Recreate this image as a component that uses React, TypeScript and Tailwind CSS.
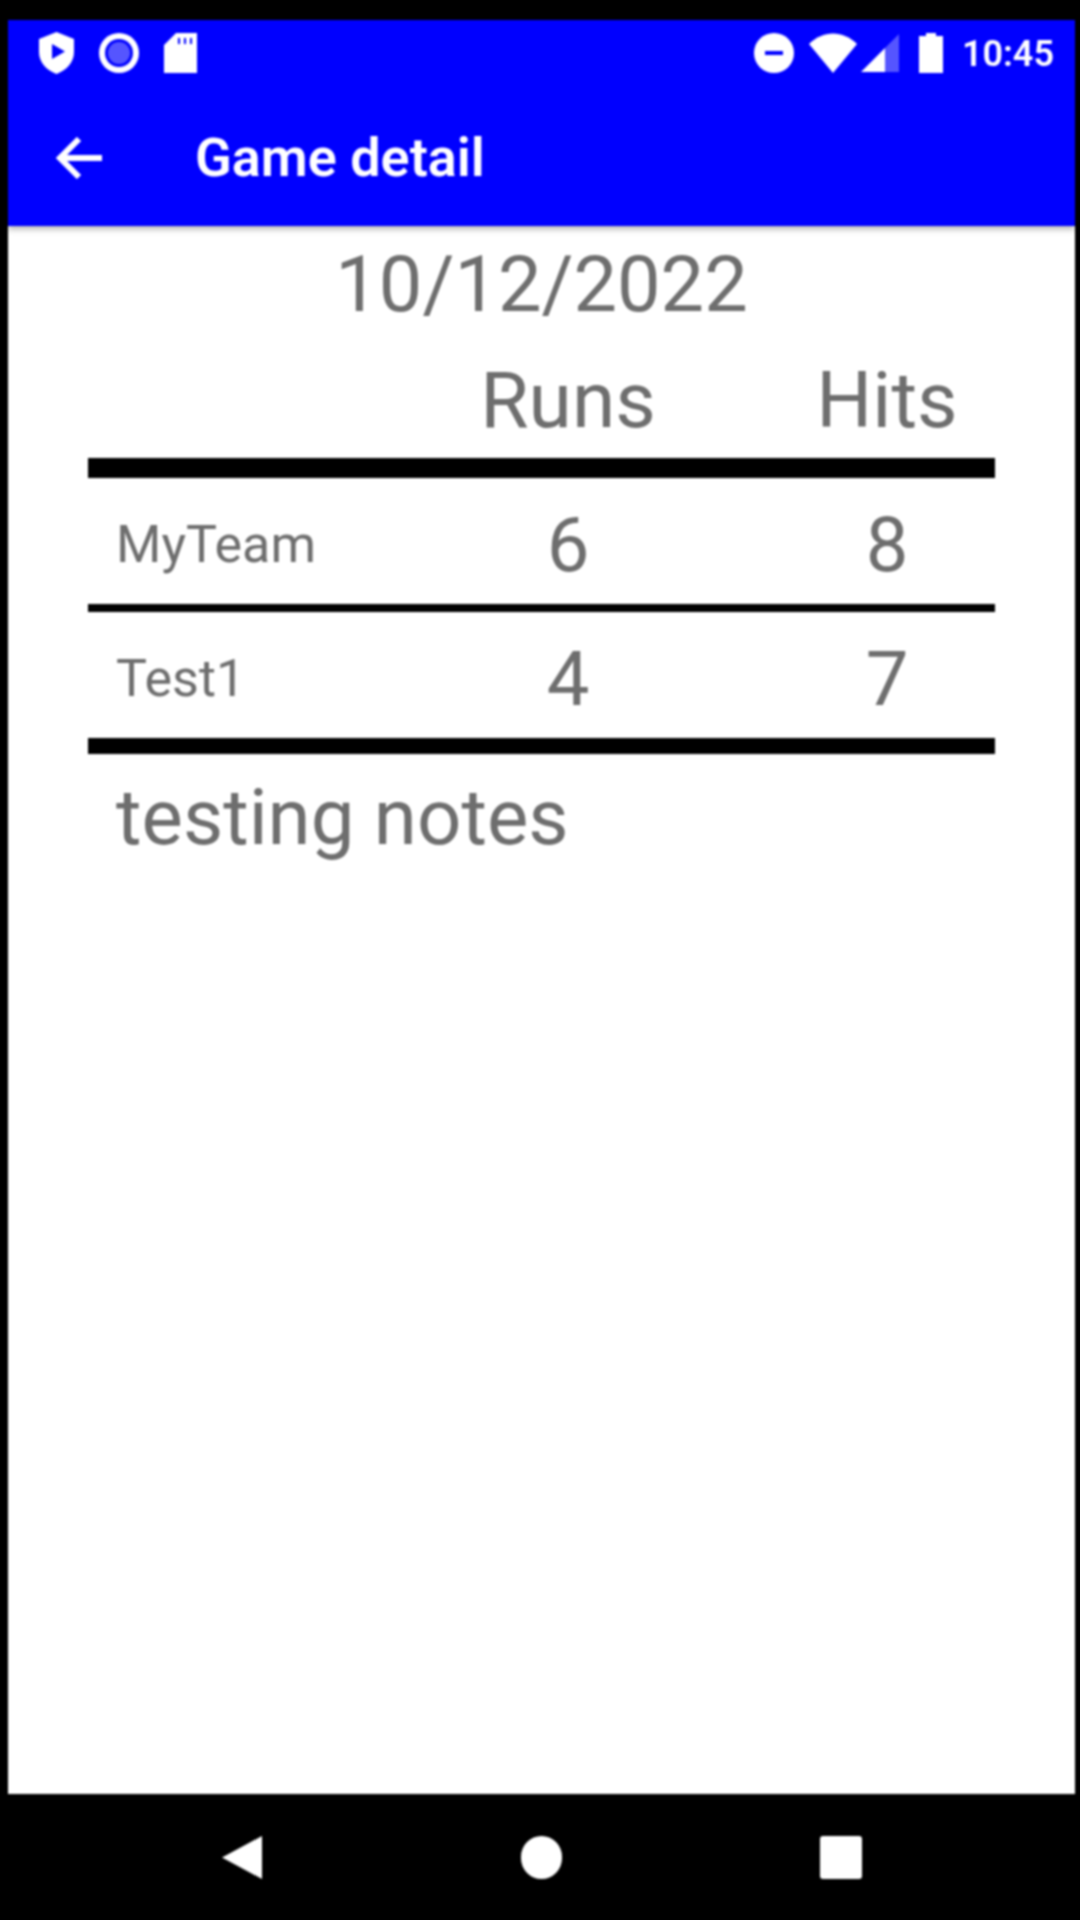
const rows = [
  { team: 'MyTeam', runs: '6', hits: '8' },
  { team: 'Test1', runs: '4', hits: '7' },
];

function StatusBar() {
  return (
    <div className="flex h-[64px] items-center justify-between pl-[30px] pr-[21px] pt-[2px] text-white">
      <div className="flex items-center">
        <svg width="37" height="42" viewBox="0 0 37 42" className="mr-[24px]">
          <path fillRule="evenodd" fill="#fff" d="M18.5 0 L36 7 V20 C36 30 29 38 18.5 42 C8 38 1 30 1 20 V7 Z M14 12 V27 L27 19.5 Z" />
        </svg>
        <svg width="40" height="40" viewBox="0 0 40 40" className="mr-[25px]">
          <circle cx="20" cy="20" r="20" fill="#fff" />
          <circle cx="20" cy="20" r="14" fill="#0000ff" />
          <circle cx="20" cy="20" r="11" fill="#5555ff" />
        </svg>
        <svg width="33" height="40" viewBox="0 0 33 40">
          <path fillRule="evenodd" fill="#fff" d="M12 0 H33 V40 H0 V12 Z M14 5 V11 H16 V5 Z M20 5 V11 H22 V5 Z M26 5 V11 H28 V5 Z" />
        </svg>
      </div>
      <div className="flex items-center">
        <svg width="40" height="40" viewBox="0 0 40 40" className="mr-[15px]">
          <circle cx="20" cy="20" r="20" fill="#fff" />
          <rect x="11" y="18" width="18" height="4" fill="#0000ff" />
        </svg>
        <svg width="48" height="40" viewBox="0 0 48 40" className="mr-[4px]">
          <path fill="#fff" d="M0 11 C14 -3 34 -3 48 11 L24 40 Z" />
        </svg>
        <svg width="38" height="38" viewBox="0 0 38 38" className="mr-[20px]">
          <path fill="#5555ff" d="M38 0 V38 H24 V14 Z" />
          <path fill="#fff" d="M24 14 V38 H0 Z" />
        </svg>
        <svg width="24" height="40" viewBox="0 0 24 40" className="mr-[19px]">
          <path fill="#fff" d="M7 0 H17 V3 H24 V40 H0 V3 H7 Z" />
        </svg>
        <span className="pt-[2px] text-[36px] font-semibold leading-[40px]">10:45</span>
      </div>
    </div>
  );
}

export default function App() {
  return (
    <div className="flex h-[1920px] w-[1080px] flex-col bg-black pt-[20px] font-['Roboto',sans-serif]">
      <div className="ml-[8px] mr-[5px] flex h-[1774px] flex-col bg-white blur-[1px]">
        <header className="h-[206px] bg-[#0000ff] shadow-[0_3px_6px_rgba(0,0,0,0.3)]">
          <StatusBar />
          <div className="flex h-[142px] items-center pl-[48px] pt-[6px] text-white">
            <svg width="48" height="42" viewBox="0 0 48 42" className="mr-[91px]" fill="none" stroke="#fff" strokeWidth="6">
              <path d="M46 21 H4 M23 2 L4 21 L23 40" />
            </svg>
            <span className="text-[54px] font-semibold leading-[60px]">Game detail</span>
          </div>
        </header>

        <main className="px-[80px] text-[#6e6e6e]">
          <div className="h-[116px] text-center text-[77.5px] leading-[118px]">10/12/2022</div>
          <div className="grid h-[116px] grid-cols-[268px_424px_214px] items-center text-center text-[78.5px]">
            <div />
            <div>Runs</div>
            <div>Hits</div>
          </div>
          <div className="h-[20px] bg-black" />
          {rows.map((row, i) => (
            <div key={row.team}>
              <div className="grid h-[126px] grid-cols-[268px_424px_214px] items-center pt-[8px] text-center text-[76px]">
                <div className="pl-[28px] text-left text-[52px]">{row.team}</div>
                <div>{row.runs}</div>
                <div>{row.hits}</div>
              </div>
              <div className={i === 0 ? 'h-[8px] bg-black' : 'h-[16px] bg-black'} />
            </div>
          ))}
          <div className="h-[128px] pl-[28px] text-[78px] leading-[128px]">testing notes</div>
        </main>
      </div>

      <nav className="flex flex-1 items-center justify-between pl-[222px] pr-[218px] blur-[1px]">
        <svg width="40" height="43" viewBox="0 0 40 43">
          <path fill="#fff" d="M40 0 V43 L0 21.5 Z" />
        </svg>
        <div className="h-[43px] w-[41px] rounded-full bg-white" />
        <div className="h-[43px] w-[42px] rounded-[3px] bg-white" />
      </nav>
    </div>
  );
}
